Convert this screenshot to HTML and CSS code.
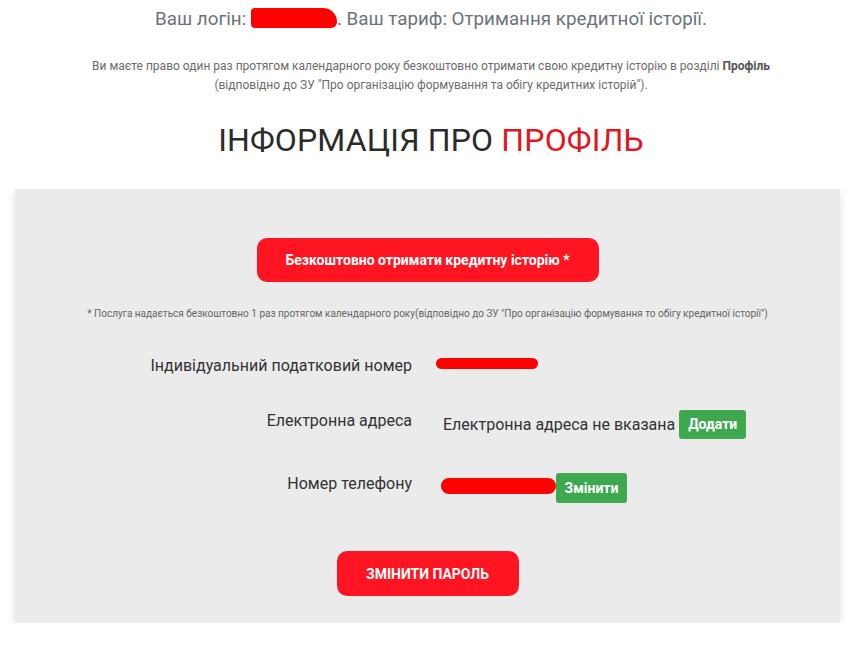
FILE: index.html
```html
<!DOCTYPE html>
<html lang="uk">
<head>
<meta charset="utf-8">
<link rel="stylesheet" href="styles.css">
</head>
<body>
<p class="login">Ваш логін: <span class="redact redact-login"></span>. Ваш тариф: Отримання кредитної історії.</p>
<p class="notice">Ви маєте право один раз протягом календарного року безкоштовно отримати свою кредитну історію в розділі <b>Профіль</b><br>(відповідно до ЗУ "Про організацію формування та обігу кредитних історій").</p>
<h1 class="title">ІНФОРМАЦІЯ ПРО <span class="accent">ПРОФІЛЬ</span></h1>
<div class="panel">
  <div class="center"><button class="btn-red btn-history">Безкоштовно отримати кредитну історію *</button></div>
  <p class="footnote">* Послуга надається безкоштовно 1 раз протягом календарного року(відповідно до ЗУ "Про організацію формування то обігу кредитної історії")</p>
  <div class="rows">
    <div class="row row-inn">
      <div class="label">Індивідуальний податковий номер</div>
      <div class="value"><span class="redact redact-inn"></span></div>
    </div>
    <div class="row row-email">
      <div class="label">Електронна адреса</div>
      <div class="value"><span class="email-text">Електронна адреса не вказана</span><button class="btn-green">Додати</button></div>
    </div>
    <div class="row row-phone">
      <div class="label">Номер телефону</div>
      <div class="value"><span class="redact redact-phone"></span><button class="btn-green">Змінити</button></div>
    </div>
  </div>
  <div class="center"><button class="btn-red btn-pass">ЗМІНИТИ ПАРОЛЬ</button></div>
</div>
</body>
</html>
```

FILE: styles.css
```css
html, body {
  margin: 0;
  padding: 0;
  background: #fff;
  font-family: Roboto, "Noto Sans", sans-serif;
}
.login {
  margin: 8px 0 0;
  text-align: center;
  font-size: 18.8px;
  line-height: 22px;
  font-weight: 400;
  color: #6c737a;
}
.redact {
  display: inline-block;
  background: #ff0000;
  vertical-align: middle;
}
.redact-login {
  width: 86px;
  height: 20px;
  border-radius: 4px 14px 6px 4px;
  margin-top: -4px;
}
.notice {
  margin: 27px 0 0;
  text-align: center;
  font-size: 12px;
  line-height: 19px;
  color: #6c6c6c;
}
.notice b {
  color: #555;
  font-weight: 700;
}
.title {
  margin: 26px 0 0;
  text-align: center;
  font-size: 32px;
  line-height: 38px;
  font-weight: 400;
  letter-spacing: 0.15px;
  color: #2b2b2b;
}
.accent {
  color: #e3161f;
}
.panel {
  margin: 30px 0 0 15px;
  width: 825px;
  box-sizing: border-box;
  background: #ebebeb;
  box-shadow: 0 4px 8px rgba(0,0,0,0.12);
  padding: 49px 0 27px;
}
.center {
  display: flex;
  justify-content: center;
}
button {
  font-family: Roboto, "Noto Sans", sans-serif;
  border: none;
  cursor: pointer;
}
.btn-red {
  background: #ff1521;
  color: #fff;
  font-weight: 700;
  font-size: 14px;
  border-radius: 10px;
}
.btn-history {
  width: 342px;
  height: 44px;
}
.btn-pass {
  width: 182px;
  height: 45px;
  margin-top: 48px;
}
.footnote {
  margin: 25px 0 0;
  text-align: center;
  font-size: 10px;
  line-height: 14px;
  color: #666;
}
.rows {
  margin-top: 31px;
  display: flex;
  flex-direction: column;
}
.row {
  display: grid;
  grid-template-columns: 397px 1fr;
  column-gap: 24px;
  align-items: center;
}
.label {
  text-align: right;
  font-size: 16px;
  line-height: 20px;
  color: #333;
}
.value {
  display: flex;
  align-items: center;
  font-size: 16px;
  color: #333;
}
.row-inn {
  height: 28px;
}
.redact-inn {
  width: 102px;
  height: 11px;
  border-radius: 6px;
  margin-top: -6px;
}
.row-email {
  margin-top: 29px;
  height: 30px;
}
.row-email .label {
  margin-top: -6px;
}
.email-text {
  margin-left: 7px;
  margin-right: 4px;
}
.btn-green {
  background: #3ea84f;
  color: #fff;
  font-weight: 700;
  font-size: 14px;
  border-radius: 3px;
  height: 29px;
  padding: 0 8px;
}
.row-email .btn-green {
  width: 67px;
}
.row-phone {
  margin-top: 34px;
  height: 30px;
}
.row-phone .label {
  margin-top: -8px;
}
.redact-phone {
  width: 115px;
  height: 16px;
  border-radius: 8px;
  margin-left: 5px;
  margin-top: -4px;
}
.row-phone .btn-green {
  width: 71px;
  height: 30px;
}
```
